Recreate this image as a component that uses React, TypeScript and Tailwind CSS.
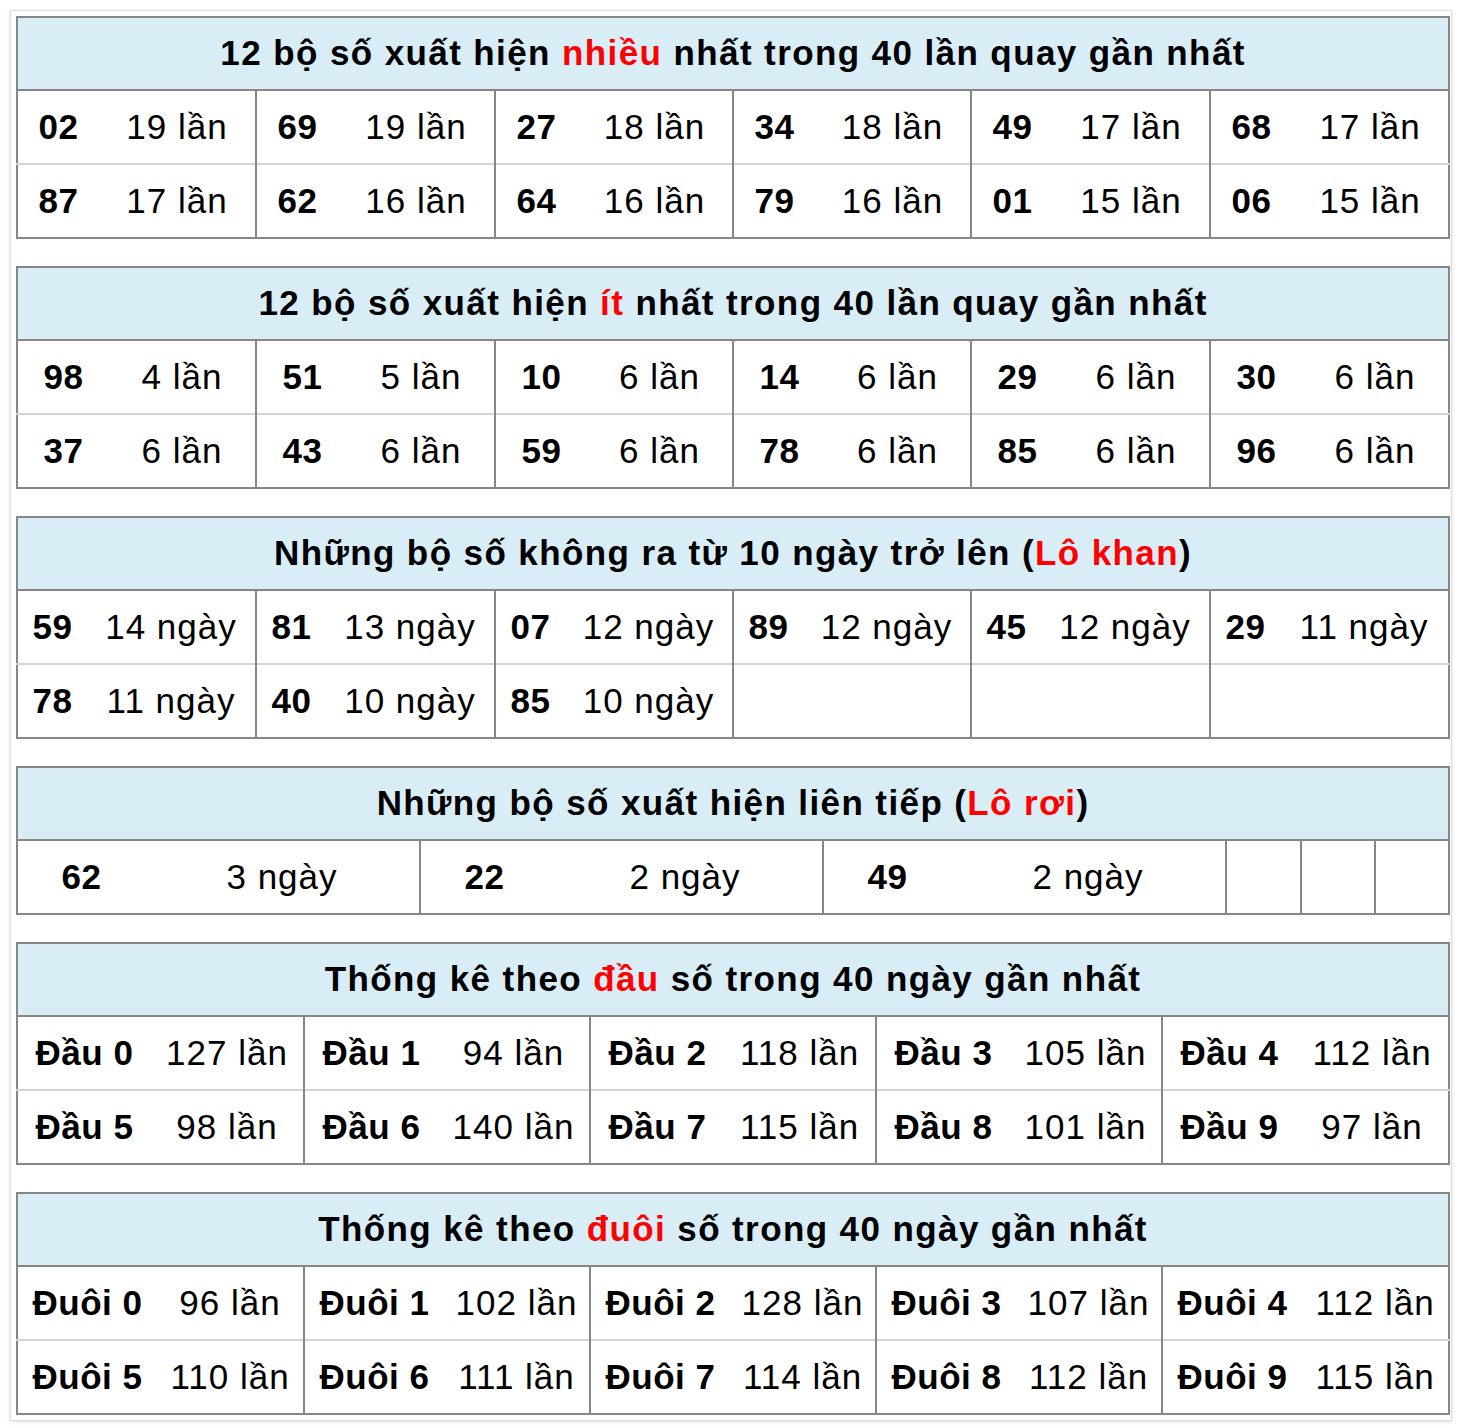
const font = { fontFamily: '"Liberation Sans", Arial, sans-serif' };

type Pair = [string, string];

const nhieu: Pair[] = [
  ["02", "19 lần"], ["69", "19 lần"], ["27", "18 lần"], ["34", "18 lần"], ["49", "17 lần"], ["68", "17 lần"],
  ["87", "17 lần"], ["62", "16 lần"], ["64", "16 lần"], ["79", "16 lần"], ["01", "15 lần"], ["06", "15 lần"],
];

const it: Pair[] = [
  ["98", "4 lần"], ["51", "5 lần"], ["10", "6 lần"], ["14", "6 lần"], ["29", "6 lần"], ["30", "6 lần"],
  ["37", "6 lần"], ["43", "6 lần"], ["59", "6 lần"], ["78", "6 lần"], ["85", "6 lần"], ["96", "6 lần"],
];

const khan: Pair[] = [
  ["59", "14 ngày"], ["81", "13 ngày"], ["07", "12 ngày"], ["89", "12 ngày"], ["45", "12 ngày"], ["29", "11 ngày"],
  ["78", "11 ngày"], ["40", "10 ngày"], ["85", "10 ngày"], ["", ""], ["", ""], ["", ""],
];

const roi: Pair[] = [
  ["62", "3 ngày"], ["22", "2 ngày"], ["49", "2 ngày"], ["", ""], ["", ""], ["", ""],
];

const dau: Pair[] = [
  ["Đầu 0", "127 lần"], ["Đầu 1", "94 lần"], ["Đầu 2", "118 lần"], ["Đầu 3", "105 lần"], ["Đầu 4", "112 lần"],
  ["Đầu 5", "98 lần"], ["Đầu 6", "140 lần"], ["Đầu 7", "115 lần"], ["Đầu 8", "101 lần"], ["Đầu 9", "97 lần"],
];

const duoi: Pair[] = [
  ["Đuôi 0", "96 lần"], ["Đuôi 1", "102 lần"], ["Đuôi 2", "128 lần"], ["Đuôi 3", "107 lần"], ["Đuôi 4", "112 lần"],
  ["Đuôi 5", "110 lần"], ["Đuôi 6", "111 lần"], ["Đuôi 7", "114 lần"], ["Đuôi 8", "112 lần"], ["Đuôi 9", "115 lần"],
];

function StatTable({
  title,
  data,
  perRow,
  widths,
}: {
  title: React.ReactNode;
  data: Pair[];
  perRow: number;
  widths: [number, number][];
}) {
  const rows: Pair[][] = [];
  for (let i = 0; i < data.length; i += perRow) rows.push(data.slice(i, i + perRow));

  return (
    <table className="w-[1433px] table-fixed border-collapse border-2 border-[#868686]">
      <colgroup>
        {widths.map(([a, b], i) => (
          <>
            <col key={"a" + i} style={{ width: a }} />
            <col key={"b" + i} style={{ width: b }} />
          </>
        ))}
      </colgroup>
      <thead>
        <tr>
          <th
            colSpan={perRow * 2}
            className="h-[73px] bg-[#d9edf7] border-b-2 border-[#868686] text-center text-[35px] font-bold tracking-[1.4px] text-black"
          >
            {title}
          </th>
        </tr>
      </thead>
      <tbody>
        {rows.map((row, r) => (
          <tr key={r} className={r > 0 ? "border-t-2 border-[#d4d4d4]" : ""}>
            {row.map(([num, count], c) => (
              <>
                <td
                  key={"n" + c}
                  className={
                    "h-[74px] text-center text-[35px] font-bold tracking-[0.5px] text-black whitespace-nowrap " +
                    (c > 0 ? "border-l-2 border-[#868686]" : "")
                  }
                >
                  {num}
                </td>
                <td
                  key={"c" + c}
                  className="h-[74px] text-center text-[35px] tracking-[1px] text-black whitespace-nowrap"
                >
                  {count}
                </td>
              </>
            ))}
          </tr>
        ))}
      </tbody>
    </table>
  );
}

const Red = ({ children }: { children: React.ReactNode }) => <span className="text-[#ff0000]">{children}</span>;

export default function App() {
  const six: [number, number][] = [[82, 157], [82, 157], [82, 156], [82, 156], [82, 157], [82, 157]];
  const sixIt: [number, number][] = [[92, 147], [92, 147], [92, 146], [92, 146], [92, 147], [92, 147]];
  const sixKhan: [number, number][] = [[70, 169], [70, 169], [70, 168], [70, 168], [70, 169], [70, 169]];
  const roiW: [number, number][] = [[128, 275], [128, 275], [128, 275], [37, 38], [37, 37], [37, 37]];
  const fiveDau: [number, number][] = [[134, 153], [134, 152], [134, 152], [134, 152], [134, 153]];
  const fiveDuoi: [number, number][] = [[140, 147], [140, 146], [140, 146], [140, 146], [140, 147]];

  return (
    <div className="bg-white min-h-[1428px] pt-[10px] pl-[10px]" style={font}>
      <div className="w-[1442px] border border-[#dcdcdc] shadow-[0_1px_4px_rgba(0,0,0,0.12)] p-[5px] flex flex-col gap-[27px]">
        <StatTable
          title={<>12 bộ số xuất hiện <Red>nhiều</Red> nhất trong 40 lần quay gần nhất</>}
          data={nhieu}
          perRow={6}
          widths={six}
        />
        <StatTable
          title={<>12 bộ số xuất hiện <Red>ít</Red> nhất trong 40 lần quay gần nhất</>}
          data={it}
          perRow={6}
          widths={sixIt}
        />
        <StatTable
          title={<>Những bộ số không ra từ 10 ngày trở lên (<Red>Lô khan</Red>)</>}
          data={khan}
          perRow={6}
          widths={sixKhan}
        />
        <StatTable
          title={<>Những bộ số xuất hiện liên tiếp (<Red>Lô rơi</Red>)</>}
          data={roi}
          perRow={6}
          widths={roiW}
        />
        <StatTable
          title={<>Thống kê theo <Red>đầu</Red> số trong 40 ngày gần nhất</>}
          data={dau}
          perRow={5}
          widths={fiveDau}
        />
        <StatTable
          title={<>Thống kê theo <Red>đuôi</Red> số trong 40 ngày gần nhất</>}
          data={duoi}
          perRow={5}
          widths={fiveDuoi}
        />
      </div>
    </div>
  );
}
